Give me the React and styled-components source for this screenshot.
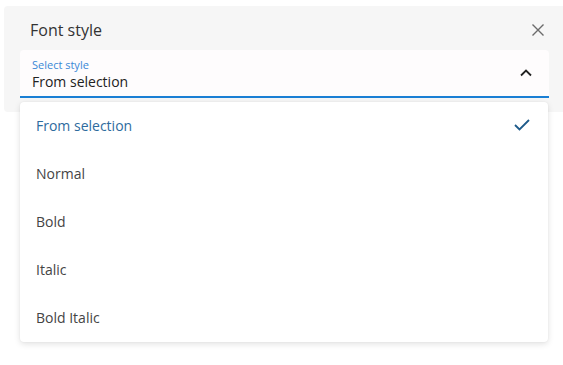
import React from 'react'
import styled, { createGlobalStyle } from 'styled-components'

const Global = createGlobalStyle`
  html, body { margin: 0; padding: 0; background: #ffffff; }
  body { font-family: 'Open Sans', 'Noto Sans', sans-serif; }
`

const Page = styled.div`
  width: 563px;
  height: 365px;
  position: relative;
  padding: 6px 0 0 4px;
  box-sizing: border-box;
`

const Panel = styled.div`
  background: #f6f6f6;
  border-radius: 4px 0 0 4px;
  height: 106px;
  padding: 0 14px 0 16px;
  box-sizing: border-box;
`

const Header = styled.div`
  display: flex;
  align-items: center;
  justify-content: space-between;
  height: 44px;
  padding: 3px 4px 0 10px;
  box-sizing: border-box;
`

const Title = styled.h1`
  margin: 0;
  font-size: 16px;
  font-weight: 400;
  color: #333333;
`

const IconButton = styled.button`
  border: 0;
  background: none;
  padding: 0;
  display: flex;
  color: #6b6b6b;
  cursor: pointer;
`

const Field = styled.div`
  background: #fefcfd;
  border-radius: 4px 4px 0 0;
  border-bottom: 2px solid #1a7fd4;
  height: 48px;
  box-sizing: border-box;
  display: flex;
  align-items: center;
  justify-content: space-between;
  padding: 0 17px 0 12px;
`

const FieldText = styled.div`
  display: flex;
  flex-direction: column;
  padding-top: 2px;
`

const Label = styled.span`
  font-size: 11px;
  line-height: 14px;
  color: #3a88d6;
`

const Value = styled.span`
  font-size: 14px;
  line-height: 19px;
  color: #222222;
`

const Menu = styled.ul`
  position: absolute;
  left: 20px;
  top: 102px;
  width: 528px;
  margin: 0;
  padding: 0;
  list-style: none;
  background: #ffffff;
  border-radius: 4px;
  box-shadow: 0 2px 6px rgba(0, 0, 0, 0.12), 0 0 2px rgba(0, 0, 0, 0.06);
`

const Item = styled.li`
  height: 48px;
  display: flex;
  align-items: center;
  justify-content: space-between;
  padding: 0 18px 2px 16px;
  box-sizing: border-box;
  font-size: 14px;
  color: ${p => (p.$selected ? '#2e6b9e' : '#444444')};
`

const options = ['From selection', 'Normal', 'Bold', 'Italic', 'Bold Italic']

export default function App() {
  return (
    <Page>
      <Global />
      <Panel>
        <Header>
          <Title>Font style</Title>
          <IconButton aria-label="Close">
            <svg width="14" height="14" viewBox="0 0 14 14" fill="none" stroke="currentColor" strokeWidth="1.4">
              <path d="M1.5 1.5 L12.5 12.5 M12.5 1.5 L1.5 12.5" />
            </svg>
          </IconButton>
        </Header>
        <Field>
          <FieldText>
            <Label>Select style</Label>
            <Value>From selection</Value>
          </FieldText>
          <svg width="12" height="8" viewBox="0 0 12 8" fill="none" stroke="#222" strokeWidth="1.8">
            <path d="M1 6.5 L6 1.5 L11 6.5" />
          </svg>
        </Field>
      </Panel>
      <Menu>
        {options.map((o, i) => (
          <Item key={o} $selected={i === 0}>
            {o}
            {i === 0 && (
              <svg width="16" height="12" viewBox="0 0 16 12" fill="none" stroke="#1d5a8a" strokeWidth="1.8">
                <path d="M1 6 L5.5 10.5 L15 1" />
              </svg>
            )}
          </Item>
        ))}
      </Menu>
    </Page>
  )
}
